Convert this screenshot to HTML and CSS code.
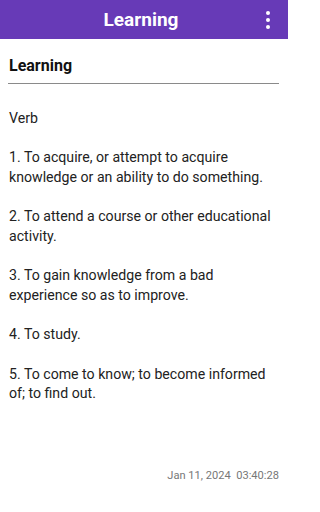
FILE: index.html
```html
<!DOCTYPE html>
<html>
<head>
<meta charset="utf-8">
<link rel="stylesheet" href="styles.css">
</head>
<body>
<div class="app">
  <header class="bar">
    <h1 class="bar-title">Learning</h1>
    <button class="menu" aria-label="More options">
      <svg width="4" height="18" viewBox="0 0 4 18"><circle cx="2" cy="2" r="2" fill="#fff"/><circle cx="2" cy="9" r="2" fill="#fff"/><circle cx="2" cy="16" r="2" fill="#fff"/></svg>
    </button>
  </header>
  <main class="content">
    <h2 class="word">Learning</h2>
    <div class="rule"></div>
    <p class="definition">Verb

1. To acquire, or attempt to acquire knowledge or an ability to do something.

2. To attend a course or other educational activity.

3. To gain knowledge from a bad experience so as to improve.

4. To study.

5. To come to know; to become informed of; to find out.</p>
    <div class="stamp">Jan 11, 2024&nbsp; 03:40:28</div>
  </main>
</div>
</body>
</html>
```

FILE: styles.css
```css
html, body {
  margin: 0;
  padding: 0;
  background: #fff;
}
body {
  font-family: Roboto, "Noto Sans", sans-serif;
  width: 288px;
  height: 512px;
  overflow: hidden;
}
.app {
  display: flex;
  flex-direction: column;
  height: 512px;
}
.bar {
  position: relative;
  height: 39px;
  background: #673ab7;
  display: flex;
  align-items: center;
  justify-content: center;
}
.bar-title {
  margin: 0;
  color: #fff;
  font-size: 19px;
  font-weight: 700;
  line-height: 39px;
  margin-left: -6px;
}
.menu {
  position: absolute;
  right: 18px;
  top: 11px;
  background: none;
  border: 0;
  padding: 0;
  width: 4px;
  height: 18px;
  display: flex;
}
.content {
  flex: 1;
  display: flex;
  flex-direction: column;
  padding: 0 9px 0 9px;
}
.word {
  margin: 15px 0 0 0;
  font-size: 16px;
  font-weight: 700;
  color: #111;
  line-height: 24px;
}
.rule {
  margin: 5px 0 0 -1px;
  height: 1px;
  background: #8a8a8a;
}
.definition {
  margin: 25px 0 0 0;
  white-space: pre-line;
  font-size: 14.15px;
  line-height: 19.65px;
  color: #222;
}
.stamp {
  margin-top: auto;
  margin-bottom: 29px;
  align-self: flex-end;
  font-size: 11.1px;
  color: #777;
  white-space: pre;
  line-height: 14px;
}
```
